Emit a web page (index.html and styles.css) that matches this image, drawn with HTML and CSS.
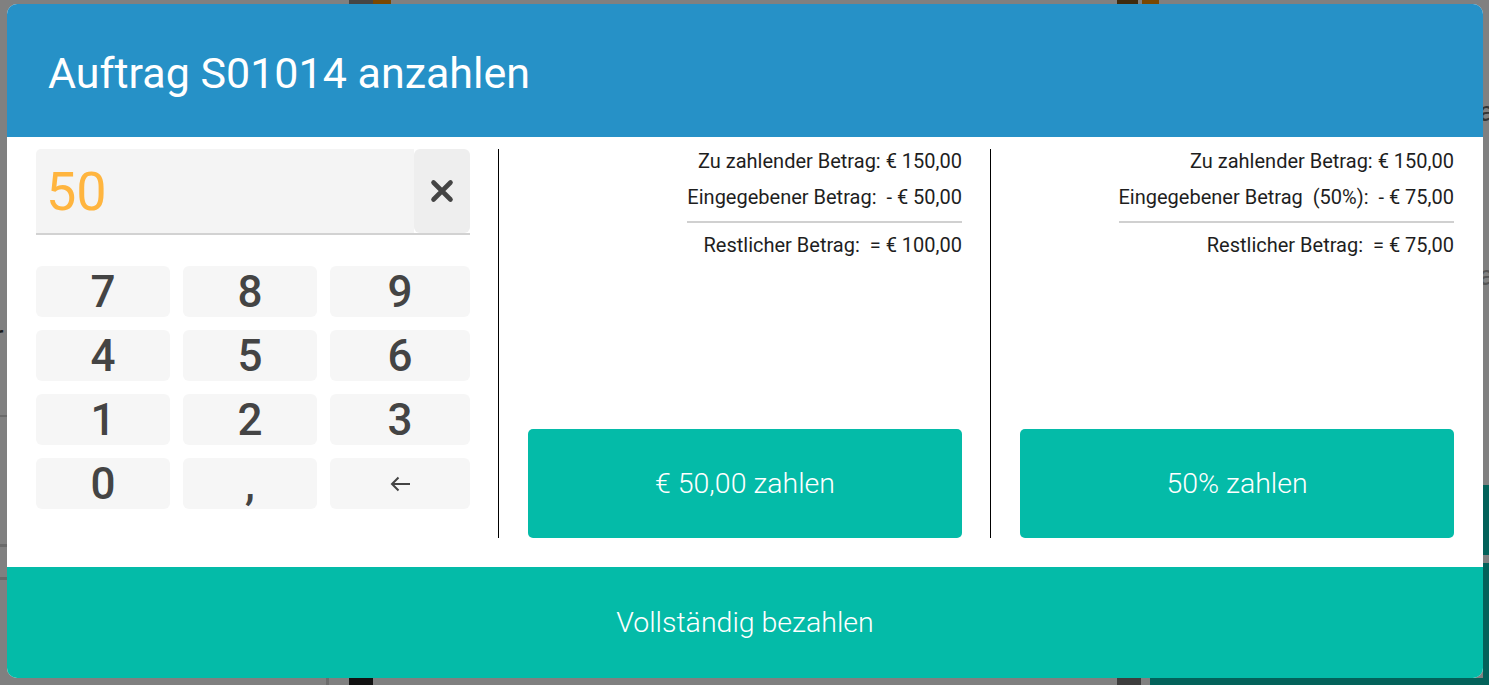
FILE: index.html
```html
<!DOCTYPE html>
<html lang="de">
<head>
<meta charset="utf-8">
<title>Auftrag S01014 anzahlen</title>
<link rel="stylesheet" href="styles.css">
</head>
<body>
<div class="backdrop">
  <span class="bit bit-t1"></span>
  <span class="bit bit-t2"></span>
  <span class="bit bit-t3"></span>
  <span class="bit bit-t4"></span>
  <span class="bit bit-b1"></span>
  <span class="bit bit-b2"></span>
  <span class="bit bit-b3"></span>
  <span class="bit bit-b4"></span>
  <span class="bit bit-r1"></span>
  <span class="bit bit-r2"></span>
  <span class="bit bit-l1"></span>
  <span class="bit bit-l2"></span>
  <span class="bit bit-l3"></span>
  <span class="bg-letter bg-l-r">r</span>
  <span class="bg-letter bg-r-a1">a</span>
  <span class="bg-letter bg-r-a2">a</span>
</div>

<div class="modal">
  <header class="modal-head">
    <h1 class="title">Auftrag S01014 anzahlen</h1>
  </header>

  <main class="modal-body">
    <section class="pad-col">
      <div class="entry">
        <div class="entry-value">50</div>
        <button class="entry-clear" aria-label="Löschen">
          <svg width="24" height="24" viewBox="0 0 24 24"><path d="M3.5 3.5L20.5 20.5M20.5 3.5L3.5 20.5" stroke="#444" stroke-width="4.6" stroke-linecap="round" fill="none"/></svg>
        </button>
      </div>
      <div class="keys">
        <button class="key">7</button>
        <button class="key">8</button>
        <button class="key">9</button>
        <button class="key">4</button>
        <button class="key">5</button>
        <button class="key">6</button>
        <button class="key">1</button>
        <button class="key">2</button>
        <button class="key">3</button>
        <button class="key">0</button>
        <button class="key">,</button>
        <button class="key" aria-label="Zurück">
          <svg width="22" height="18" viewBox="0 0 22 18"><path d="M21 9H3M9.5 2.5L3 9l6.5 6.5" stroke="#444" stroke-width="2" fill="none"/></svg>
        </button>
      </div>
    </section>

    <section class="pay-col">
      <div class="calc">
        <div class="line">Zu zahlender Betrag: € 150,00</div>
        <div class="line">Eingegebener Betrag:&nbsp; - € 50,00</div>
        <div class="sep"></div>
        <div class="line">Restlicher Betrag:&nbsp; = € 100,00</div>
      </div>
      <button class="pay">€ 50,00 zahlen</button>
    </section>

    <section class="pay-col">
      <div class="calc">
        <div class="line">Zu zahlender Betrag: € 150,00</div>
        <div class="line">Eingegebener Betrag&nbsp; (50%):&nbsp; - € 75,00</div>
        <div class="sep"></div>
        <div class="line">Restlicher Betrag:&nbsp; = € 75,00</div>
      </div>
      <button class="pay">50% zahlen</button>
    </section>
  </main>

  <button class="pay-full">Vollständig bezahlen</button>
</div>
</body>
</html>
```

FILE: styles.css
```css
html, body {
  margin: 0;
  padding: 0;
}

body {
  position: relative;
  width: 1489px;
  height: 685px;
  overflow: hidden;
  background: #808080;
  font-family: Roboto, "Liberation Sans", Arial, sans-serif;
  padding-top: 4px;
  box-sizing: border-box;
}

/* dimmed page behind the dialog */
.backdrop {
  position: absolute;
  inset: 0;
  z-index: 0;
}

.bit {
  position: absolute;
  display: block;
}

.bit-t1 { left: 349px; top: 0; width: 24px; height: 4px; background: #454545; }
.bit-t2 { left: 373px; top: 0; width: 18px; height: 4px; background: #7a4700; }
.bit-t3 { left: 1117px; top: 0; width: 21px; height: 4px; background: #3e2a0e; }
.bit-t4 { left: 1142px; top: 0; width: 17px; height: 4px; background: #7a4700; }

.bit-b1 { left: 326px; top: 678px; width: 3px; height: 7px; background: #6c6c6c; }
.bit-b2 { left: 349px; top: 678px; width: 24px; height: 7px; background: #121212; }
.bit-b3 { left: 1117px; top: 678px; width: 24px; height: 7px; background: #3d3d3d; }
.bit-b4 { left: 1150px; top: 678px; width: 339px; height: 7px; background: #03625a; }

.bit-r1 { left: 1483px; top: 485px; width: 6px; height: 70px; background: #03625a; }
.bit-r2 { left: 1483px; top: 563px; width: 6px; height: 122px; background: #03625a; }

.bit-l1 { left: 0; top: 415px; width: 7px; height: 2px; background: #6a6a6a; }
.bit-l2 { left: 0; top: 544px; width: 7px; height: 3px; background: #6a6a6a; }
.bit-l3 { left: 0; top: 577px; width: 7px; height: 3px; background: #6a6a6a; }

.bg-letter {
  position: absolute;
  font-size: 28px;
  line-height: 1;
  color: #1a1a1a;
}

.bg-l-r { left: -6px; top: 322px; }
.bg-r-a1 { left: 1479px; top: 98px; color: #333; }
.bg-r-a2 { left: 1479px; top: 262px; color: #555; }

/* dialog */
.modal {
  position: relative;
  z-index: 1;
  width: 1476px;
  height: 674px;
  margin-left: 7px;
  border-radius: 10px;
  overflow: hidden;
  background: #ffffff;
  display: flex;
  flex-direction: column;
}

.modal-head {
  flex: none;
  height: 133px;
  box-sizing: border-box;
  padding: 4px 41px 0;
  background: #2691c7;
  display: flex;
  align-items: center;
}

.title {
  margin: 0;
  font-size: 43px;
  font-weight: 400;
  color: #ffffff;
  line-height: normal;
}

.modal-body {
  flex: none;
  height: 430px;
  box-sizing: border-box;
  padding: 12px 29px 29px;
  display: flex;
}

/* numpad column */
.pad-col {
  flex: none;
  width: 434px;
  display: flex;
  flex-direction: column;
}

.entry {
  display: flex;
  height: 86px;
  box-sizing: border-box;
  border-bottom: 2px solid #d2d2d2;
}

.entry-value {
  flex: 1;
  display: flex;
  align-items: center;
  padding-left: 10px;
  background: #f4f4f4;
  border-top-left-radius: 5px;
  font-size: 54px;
  color: #ffb53f;
}

.entry-clear {
  flex: none;
  width: 56px;
  padding: 0;
  border: 0;
  border-radius: 6px;
  background: #eeeeee;
  display: flex;
  align-items: center;
  justify-content: center;
}

.keys {
  margin-top: 31px;
  display: grid;
  grid-template-columns: 134px 134px 1fr;
  grid-auto-rows: 51px;
  gap: 13px;
}

.key {
  padding: 0;
  border: 0;
  border-radius: 6px;
  background: #f6f6f6;
  font-family: Roboto, "Liberation Sans", Arial, sans-serif;
  font-size: 44px;
  font-weight: 500;
  line-height: 1;
  color: #444444;
  display: flex;
  align-items: center;
  justify-content: center;
}

/* payment columns */
.pay-col {
  flex: none;
  width: 434px;
  margin-left: 28px;
  padding-left: 29px;
  border-left: 1px solid #000000;
  display: flex;
  flex-direction: column;
}

.calc {
  align-self: flex-end;
  text-align: right;
  font-size: 20px;
  color: #1e1e1e;
}

.line {
  line-height: 24px;
  margin-bottom: 12px;
  white-space: nowrap;
}

.line:last-child {
  margin-bottom: 0;
}

.sep {
  height: 2px;
  background: #d0d0d0;
  margin-bottom: 10px;
}

.pay {
  margin-top: auto;
  height: 109px;
  border: 0;
  border-radius: 5px;
  background: #04bba8;
  color: #ffffff;
  font-family: Roboto, "Liberation Sans", Arial, sans-serif;
  font-size: 28.5px;
  font-weight: 300;
}

.pay-full {
  flex: 1;
  border: 0;
  background: #04bba8;
  color: #ffffff;
  font-family: Roboto, "Liberation Sans", Arial, sans-serif;
  font-size: 28.5px;
  font-weight: 300;
}
```
